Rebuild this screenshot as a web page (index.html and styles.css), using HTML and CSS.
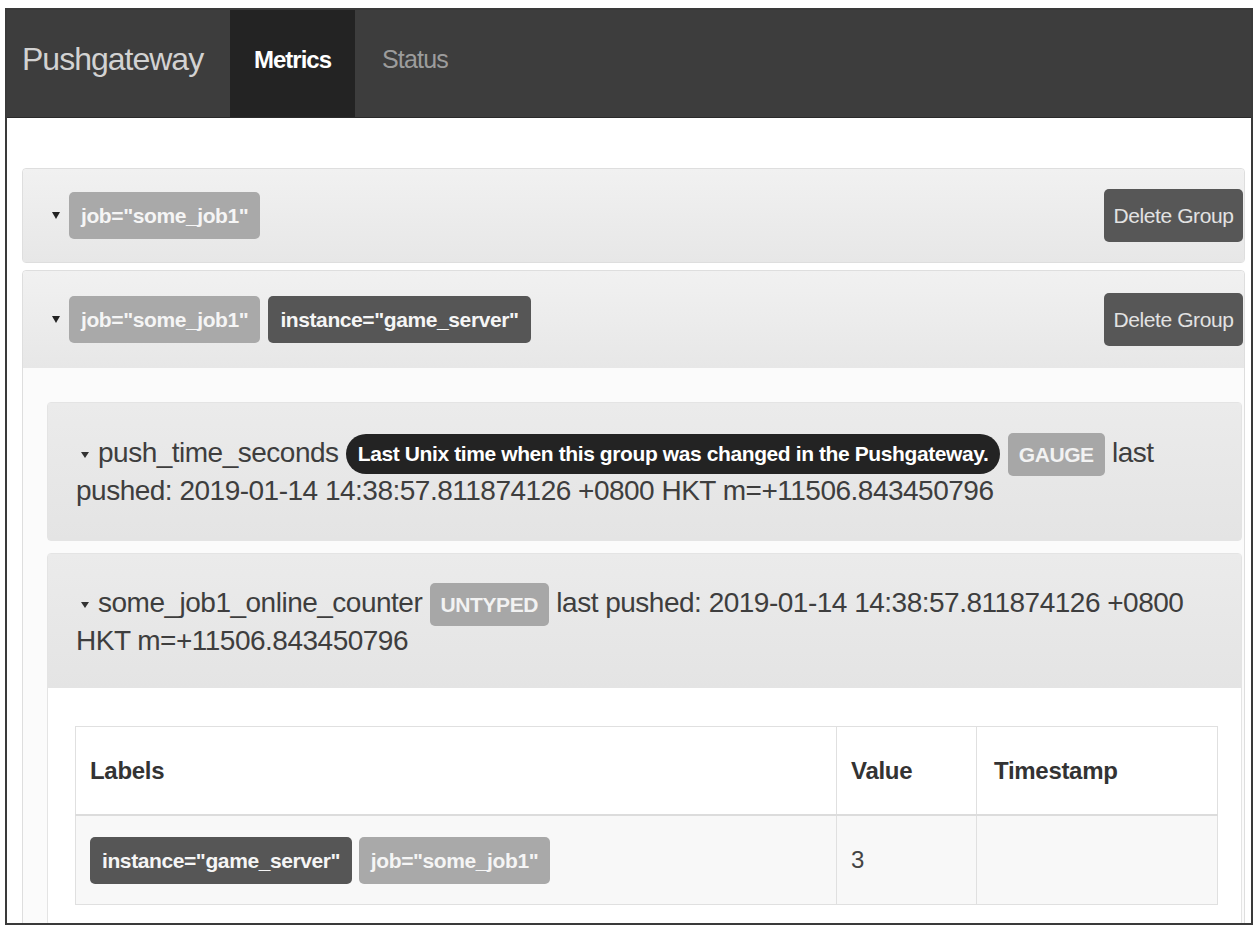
FILE: index.html
```html
<!DOCTYPE html>
<html>
<head>
<meta charset="utf-8">
<title>Pushgateway</title>
<link rel="stylesheet" href="styles.css">
</head>
<body>
<div class="frame">
  <nav class="navbar">
    <div class="brand">Pushgateway</div>
    <a class="tab active">Metrics</a>
    <a class="tab">Status</a>
  </nav>
  <div class="container">
    <div class="group">
      <div class="group-head">
        <span class="caret"></span>
        <span class="label label-light">job="some_job1"</span>
        <span class="btn">Delete Group</span>
      </div>
    </div>
    <div class="group">
      <div class="group-head">
        <span class="caret"></span>
        <span class="label label-light">job="some_job1"</span>
        <span class="label label-dark">instance="game_server"</span>
        <span class="btn">Delete Group</span>
      </div>
      <div class="group-body">
        <div class="metric">
          <div class="metric-head first"><span class="mcaret"></span>push_time_seconds <span class="help">Last Unix time when this group was changed in the Pushgateway.</span> <span class="type">GAUGE</span> last pushed: 2019-01-14 14:38:57.811874126 +0800 HKT m=+11506.843450796</div>
        </div>
        <div class="metric">
          <div class="metric-head"><span class="mcaret"></span>some_job1_online_counter <span class="type">UNTYPED</span> last pushed: 2019-01-14 14:38:57.811874126 +0800 HKT m=+11506.843450796</div>
          <div class="metric-body">
            <table class="tbl">
              <thead>
                <tr><th class="c-labels">Labels</th><th class="c-value">Value</th><th class="c-ts">Timestamp</th></tr>
              </thead>
              <tbody>
                <tr>
                  <td><span class="label label-dark">instance="game_server"</span> <span class="label label-light">job="some_job1"</span></td>
                  <td class="num">3</td>
                  <td></td>
                </tr>
              </tbody>
            </table>
          </div>
        </div>
      </div>
    </div>
  </div>
</div>
</body>
</html>
```

FILE: styles.css
```css
html, body {
  margin: 0;
  padding: 0;
  background: #ffffff;
}
body {
  font-family: "Liberation Sans", Arial, sans-serif;
  color: #3c3c3c;
}
.frame {
  margin: 8px 0 0 5px;
  width: 1244px;
  height: 913px;
  border: 2px solid #3a3a3a;
  overflow: hidden;
  background: #ffffff;
}
.navbar {
  display: flex;
  height: 107px;
  background: #3d3d3d;
  border-bottom: 1px solid #2a2a2a;
}
.brand {
  width: 208px;
  padding-left: 15px;
  display: flex;
  align-items: center;
  padding-bottom: 8px;
  font-size: 32px;
  letter-spacing: -1px;
  color: #d2d2d2;
  white-space: nowrap;
}
.tab {
  display: flex;
  align-items: center;
  padding: 0 24px 8px 24px;
  font-size: 25px;
  letter-spacing: -0.8px;
  color: #9c9c9c;
  white-space: nowrap;
}
.tab.active {
  width: 77px;
  background: #232323;
  color: #ffffff;
  font-weight: bold;
  font-size: 24px;
  letter-spacing: -1px;
}
.tab + .tab {
  padding-left: 27px;
}
.container {
  padding: 50px 6px 0 15px;
}
.group {
  border: 1px solid #dedede;
  border-radius: 4px;
  margin-bottom: 7px;
  background: #fbfbfb;
}
.group-head {
  display: flex;
  align-items: center;
  height: 93px;
  padding: 0 1px 0 29px;
  background: linear-gradient(#f1f1f1, #e7e7e7);
  border-radius: 4px 4px 0 0;
}
.group + .group .group-head {
  height: 97px;
}
.caret {
  width: 0;
  height: 0;
  border-left: 4.5px solid transparent;
  border-right: 4.5px solid transparent;
  border-top: 7px solid #222;
  margin-right: 9px;
}
.label {
  display: inline-block;
  height: 47px;
  line-height: 47px;
  padding: 0 12px;
  border-radius: 5px;
  font-size: 21px;
  letter-spacing: -0.4px;
  font-weight: bold;
  color: #f5f5f5;
  white-space: nowrap;
  vertical-align: middle;
}
.group-head .label + .label {
  margin-left: 8px;
}
.label-light {
  background: #a9a9a9;
}
.label-dark {
  background: #565656;
}
.btn {
  margin-left: auto;
  width: 139px;
  height: 53px;
  line-height: 53px;
  text-align: center;
  background: #575757;
  color: #e2e2e2;
  border-radius: 5px;
  font-size: 21px;
  letter-spacing: -0.4px;
  white-space: nowrap;
}
.group-body {
  padding: 34px 2px 10px 24px;
}
.metric {
  background: #ffffff;
  border-radius: 4px;
  margin-bottom: 12px;
  border: 1px solid #e4e4e4;
}
.metric-head {
  background: linear-gradient(#ebebeb, #e4e4e4);
  padding: 30px 28px 29px 28px;
  font-size: 28px;
  letter-spacing: -0.5px;
  line-height: 37px;
  color: #3e3e3e;
}
.metric-head.first {
  padding-top: 31px;
  padding-bottom: 30px;
  line-height: 38px;
}
.mcaret {
  display: inline-block;
  width: 0;
  height: 0;
  border-left: 4px solid transparent;
  border-right: 4px solid transparent;
  border-top: 6px solid #333;
  margin: 0 9px 0 5px;
  vertical-align: middle;
}
.help {
  display: inline-block;
  height: 40px;
  line-height: 40px;
  padding: 0 12px;
  border-radius: 20px;
  background: #232323;
  color: #ffffff;
  font-size: 21px;
  letter-spacing: -0.4px;
  font-weight: bold;
  vertical-align: middle;
  margin: -4px 0 -2px;
}
.type {
  display: inline-block;
  height: 43px;
  line-height: 43px;
  padding: 0 11px;
  border-radius: 5px;
  background: #a7a7a7;
  color: #f2f2f2;
  font-size: 21px;
  letter-spacing: -0.4px;
  font-weight: bold;
  vertical-align: middle;
  margin: -4px 0 -4px;
}
.metric-body {
  padding: 38px 23px 20px 27px;
}
.tbl {
  width: 100%;
  border-collapse: collapse;
  border: 1px solid #dddddd;
}
.tbl th, .tbl td {
  border: 1px solid #e0e0e0;
  text-align: left;
  padding: 0 14px;
}
.tbl th {
  height: 87px;
  font-size: 24px;
  letter-spacing: -0.3px;
  font-weight: bold;
  color: #333;
  background: #ffffff;
  border-bottom: 2px solid #dcdcdc;
}
.tbl td {
  height: 88px;
  font-size: 24px;
  background: #f8f8f8;
  color: #444;
}
.c-value {
  width: 111px;
}
.c-ts {
  width: 209px;
}
.tbl th.c-ts {
  padding-left: 17px;
}
```
